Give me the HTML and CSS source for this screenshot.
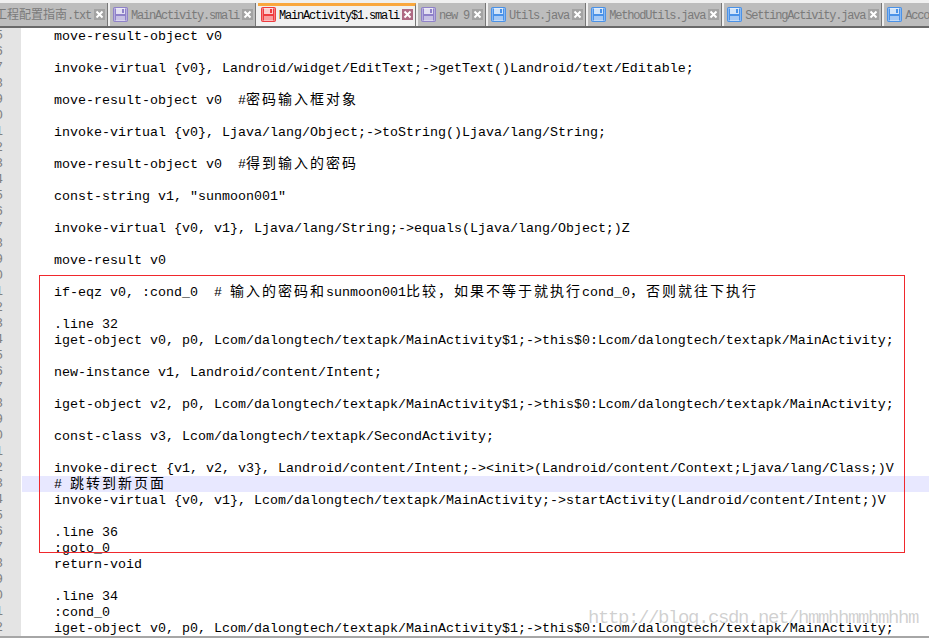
FILE: index.html
```html
<!DOCTYPE html>
<html lang="zh">
<head>
<meta charset="utf-8">
<title>MainActivity$1.smali</title>
<link rel="stylesheet" href="styles.css">
</head>
<body>
<svg class="defs" width="0" height="0" aria-hidden="true">
  <symbol id="disk" viewBox="0 0 15 15">
    <rect x="0.5" y="0.5" width="14" height="14" rx="1" fill="currentColor" stroke="currentColor"/>
    <rect x="1.5" y="1.5" width="12" height="12" fill="none" stroke="#fff" stroke-opacity=".35"/>
    <rect x="3" y="1" width="9" height="6" fill="#fff" fill-opacity=".75"/>
    <rect x="3" y="9" width="9" height="5" fill="#fff" fill-opacity=".5"/>
    <rect x="9" y="2" width="2" height="4" fill="currentColor"/>
  </symbol>
  <symbol id="x" viewBox="0 0 11 11">
    <rect width="11" height="11" fill="currentColor"/>
    <path d="M2.5 2.5l6 6M8.5 2.5l-6 6" stroke="#fff" stroke-width="2" fill="none"/>
  </symbol>
</svg>

<nav class="tabs">
  <div class="tab first"><svg class="ico blue"><use href="#disk"/></svg><span class="name"><span class="zh">工程配置指南</span>.txt</span><svg class="close"><use href="#x"/></svg></div>
  <div class="tab"><svg class="ico purple"><use href="#disk"/></svg><span class="name">MainActivity.smali</span><svg class="close"><use href="#x"/></svg></div>
  <div class="tab active"><svg class="ico red"><use href="#disk"/></svg><span class="name">MainActivity$1.smali</span><svg class="close"><use href="#x"/></svg></div>
  <div class="tab"><svg class="ico purple"><use href="#disk"/></svg><span class="name">new 9</span><svg class="close"><use href="#x"/></svg></div>
  <div class="tab"><svg class="ico blue"><use href="#disk"/></svg><span class="name">Utils.java</span><svg class="close"><use href="#x"/></svg></div>
  <div class="tab"><svg class="ico blue"><use href="#disk"/></svg><span class="name">MethodUtils.java</span><svg class="close"><use href="#x"/></svg></div>
  <div class="tab"><svg class="ico blue"><use href="#disk"/></svg><span class="name">SettingActivity.java</span><svg class="close"><use href="#x"/></svg></div>
  <div class="tab"><svg class="ico blue"><use href="#disk"/></svg><span class="name">AccountActivity.java</span><svg class="close"><use href="#x"/></svg></div>
</nav>

<main class="editor">
  <div class="row"><i>5</i><code>move-result-object v0</code></div>
  <div class="row"><i>6</i><code></code></div>
  <div class="row"><i>7</i><code>invoke-virtual {v0}, Landroid/widget/EditText;-&gt;getText()Landroid/text/Editable;</code></div>
  <div class="row"><i>8</i><code></code></div>
  <div class="row"><i>9</i><code>move-result-object v0  #<span class="zh">密码输入框对象</span></code></div>
  <div class="row"><i>0</i><code></code></div>
  <div class="row"><i>1</i><code>invoke-virtual {v0}, Ljava/lang/Object;-&gt;toString()Ljava/lang/String;</code></div>
  <div class="row"><i>2</i><code></code></div>
  <div class="row"><i>3</i><code>move-result-object v0  #<span class="zh">得到输入的密码</span></code></div>
  <div class="row"><i>4</i><code></code></div>
  <div class="row"><i>5</i><code>const-string v1, "sunmoon001"</code></div>
  <div class="row"><i>6</i><code></code></div>
  <div class="row"><i>7</i><code>invoke-virtual {v0, v1}, Ljava/lang/String;-&gt;equals(Ljava/lang/Object;)Z</code></div>
  <div class="row"><i>8</i><code></code></div>
  <div class="row"><i>9</i><code>move-result v0</code></div>
  <div class="row"><i>0</i><code></code></div>
  <div class="row"><i>1</i><code>if-eqz v0, :cond_0  # <span class="zh">输入的密码和</span>sunmoon001<span class="zh">比较，如果不等于就执行</span>cond_0<span class="zh">，否则就往下执行</span></code></div>
  <div class="row"><i>2</i><code></code></div>
  <div class="row"><i>3</i><code>.line 32</code></div>
  <div class="row"><i>4</i><code>iget-object v0, p0, Lcom/dalongtech/textapk/MainActivity$1;-&gt;this$0:Lcom/dalongtech/textapk/MainActivity;</code></div>
  <div class="row"><i>5</i><code></code></div>
  <div class="row"><i>6</i><code>new-instance v1, Landroid/content/Intent;</code></div>
  <div class="row"><i>7</i><code></code></div>
  <div class="row"><i>8</i><code>iget-object v2, p0, Lcom/dalongtech/textapk/MainActivity$1;-&gt;this$0:Lcom/dalongtech/textapk/MainActivity;</code></div>
  <div class="row"><i>9</i><code></code></div>
  <div class="row"><i>0</i><code>const-class v3, Lcom/dalongtech/textapk/SecondActivity;</code></div>
  <div class="row"><i>1</i><code></code></div>
  <div class="row"><i>2</i><code>invoke-direct {v1, v2, v3}, Landroid/content/Intent;-&gt;&lt;init&gt;(Landroid/content/Context;Ljava/lang/Class;)V</code></div>
  <div class="row current"><i>3</i><code># <span class="zh">跳转到新页面</span></code></div>
  <div class="row"><i>4</i><code>invoke-virtual {v0, v1}, Lcom/dalongtech/textapk/MainActivity;-&gt;startActivity(Landroid/content/Intent;)V</code></div>
  <div class="row"><i>5</i><code></code></div>
  <div class="row"><i>6</i><code>.line 36</code></div>
  <div class="row"><i>7</i><code>:goto_0</code></div>
  <div class="row"><i>8</i><code>return-void</code></div>
  <div class="row"><i>9</i><code></code></div>
  <div class="row"><i>0</i><code>.line 34</code></div>
  <div class="row"><i>1</i><code>:cond_0</code></div>
  <div class="row"><i>2</i><code>iget-object v0, p0, Lcom/dalongtech/textapk/MainActivity$1;-&gt;this$0:Lcom/dalongtech/textapk/MainActivity;</code></div>
  <div class="redbox"></div>
  <div class="watermark">http://blog.csdn.net/hmmhhmmhmhhm</div>
</main>
</body>
</html>
```
FILE: styles.css
```css
* { box-sizing: border-box; }
html, body { margin: 0; height: 100%; overflow: hidden; background: #fff; }
body { width: 929px; height: 638px; display: flex; flex-direction: column; font-family: "Liberation Mono", "Noto Sans CJK SC", monospace; }
.defs { position: absolute; }

.tabs { display: flex; flex: none; height: 28px; padding-top: 3px; gap: 2px; background: #f0f0f0; border-bottom: 2px solid #696969; overflow: hidden; }
.tab { display: flex; flex: none; align-items: center; height: 23px; padding: 0 2px 0 3px; background: #bdbdbd; color: #7a7a7a; border-right: 1px solid #777; font-size: 12px; letter-spacing: -1.2px; }
.tab.first { margin-left: -26px; }
.tab.active { background: #f0f0f0; color: #000; border-top: 3px solid #f9a73e; padding-bottom: 3px; }
.ico { flex: none; width: 15px; height: 15px; margin-right: 3px; }
.ico.purple { color: #8f82c9; }
.ico.red { color: #ee3b3f; }
.ico.blue { color: #4a92e8; }
.name { white-space: pre; line-height: 16px; padding-top: 2px; }
.name .zh { font-size: 12px; letter-spacing: 0; }
.close { flex: none; width: 11px; height: 11px; margin-left: 3px; color: #a3a3a3; }
.active .close { color: #ae6a83; }

.editor { position: relative; flex: none; height: 608px; overflow: hidden; }
.row { display: flex; height: 16px; }
.row i { flex: none; width: 21px; height: 16px; margin-right: 1px; background: #e4e4e4; color: #808080; font: 13.33px/16px "Liberation Mono", monospace; text-indent: -5px; overflow: hidden; }
.row code { flex: 1 0 auto; height: 16px; padding-left: 32px; color: #000; font: 13.333px/18px "Liberation Mono", monospace; white-space: pre; }
.row.current code { background: #e8e8ff; }
.zh { font-family: "Noto Sans CJK SC", sans-serif; font-size: 14px; line-height: 0; letter-spacing: 2px; }

.redbox { position: absolute; left: 39px; top: 247px; width: 866px; height: 278px; border: 1px solid #f0282d; }
.watermark { position: absolute; left: 588px; top: 577px; font: 19px/26px "Liberation Mono", monospace; letter-spacing: -1.4px; color: rgba(120, 120, 120, .35); white-space: nowrap; }
body::after { content: ""; display: block; flex: none; height: 2px; background: #a6a6a6; }
```
